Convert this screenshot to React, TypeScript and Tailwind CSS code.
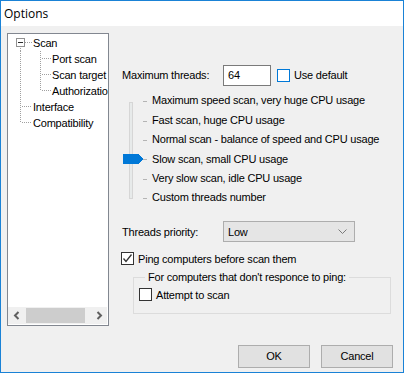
import React from "react";

const font = { fontFamily: '"Liberation Sans", Arial, sans-serif' };

function TreeRow({ kind, label }: { kind: "root" | "child" | "lastchild" | "top" | "lasttop"; label: string }) {
  return (
    <div className="flex items-center h-[16px]">
      <svg width="44" height="16" className="shrink-0" shapeRendering="crispEdges">
        {kind === "root" && (
          <g>
            <rect x="8.5" y="3.5" width="8" height="8" fill="white" stroke="#919191" />
            <line x1="10" y1="7.5" x2="15" y2="7.5" stroke="#2b2b2b" />
            <line x1="17" y1="7.5" x2="24" y2="7.5" stroke="#a0a0a0" strokeDasharray="1 1" />
            <line x1="12.5" y1="13" x2="12.5" y2="16" stroke="#a0a0a0" strokeDasharray="1 1" />
          </g>
        )}
        {(kind === "child" || kind === "lastchild") && (
          <g>
            <line x1="12.5" y1="0" x2="12.5" y2="16" stroke="#a0a0a0" strokeDasharray="1 1" />
            <line x1="32.5" y1="0" x2="32.5" y2={kind === "lastchild" ? 8 : 16} stroke="#a0a0a0" strokeDasharray="1 1" />
            <line x1="34" y1="7.5" x2="43" y2="7.5" stroke="#a0a0a0" strokeDasharray="1 1" />
          </g>
        )}
        {(kind === "top" || kind === "lasttop") && (
          <g>
            <line x1="12.5" y1="0" x2="12.5" y2={kind === "lasttop" ? 8 : 16} stroke="#a0a0a0" strokeDasharray="1 1" />
            <line x1="14" y1="7.5" x2="24" y2="7.5" stroke="#a0a0a0" strokeDasharray="1 1" />
          </g>
        )}
      </svg>
      <span
        className={
          "whitespace-nowrap text-[11px] tracking-[-0.2px] text-black " +
          (kind === "root" || kind === "top" || kind === "lasttop" ? "-ml-[19px]" : "ml-0")
        }
      >
        {label}
      </span>
    </div>
  );
}

function CheckBox({ checked, blue }: { checked?: boolean; blue?: boolean }) {
  return (
    <span
      className={
        "w-[13px] h-[13px] shrink-0 bg-white border flex items-center justify-center " +
        (blue ? "border-[#0078d7]" : "border-[#333333]")
      }
    >
      {checked && (
        <svg width="11" height="11" viewBox="0 0 11 11">
          <polyline points="1.5,5.5 4,8.5 9.5,1.5" fill="none" stroke="#333" strokeWidth="1.3" />
        </svg>
      )}
    </span>
  );
}

const levels = [
  "Maximum speed scan, very huge CPU usage",
  "Fast scan, huge CPU usage",
  "Normal scan - balance of speed and CPU usage",
  "Slow scan, small CPU usage",
  "Very slow scan, idle CPU usage",
  "Custom threads number",
];

export default function App() {
  return (
    <div
      className="w-[404px] h-[373px] border border-[#1a82d6] flex flex-col bg-[#f0f0f0] text-[11px] text-black overflow-hidden"
      style={font}
    >
      <div
        className="h-[25px] bg-white flex items-center pl-[3px] text-[12px] shrink-0"
        style={{ fontFamily: '"Open Sans", "Noto Sans", sans-serif' }}
      >
        Options
      </div>
      <div className="flex-1 flex flex-col pl-[6px] pr-[10px] pt-[7px] tracking-[-0.2px]">
        <div className="flex gap-[13px]">
          {/* Tree */}
          <div className="w-[102px] h-[293px] border border-[#828790] bg-white flex flex-col shrink-0">
            <div className="flex-1 pt-[1px] overflow-hidden">
              <TreeRow kind="root" label="Scan" />
              <TreeRow kind="child" label="Port scan" />
              <TreeRow kind="child" label="Scan target" />
              <TreeRow kind="lastchild" label="Authorization" />
              <TreeRow kind="top" label="Interface" />
              <TreeRow kind="lasttop" label="Compatibility" />
            </div>
            <div className="h-[17px] bg-[#f0f0f0] flex items-center mb-[1px] mr-[1px]">
              <div className="w-[17px] h-full flex items-center justify-center">
                <svg width="8" height="9" viewBox="0 0 8 9">
                  <polyline points="5.5,1 2,4.5 5.5,8" fill="none" stroke="#606060" strokeWidth="2" />
                </svg>
              </div>
              <div className="ml-[1px] w-[59px] h-[15px] bg-[#cdcdcd]" />
              <div className="flex-1" />
              <div className="w-[17px] h-full flex items-center justify-center">
                <svg width="8" height="9" viewBox="0 0 8 9">
                  <polyline points="2.5,1 6,4.5 2.5,8" fill="none" stroke="#606060" strokeWidth="2" />
                </svg>
              </div>
            </div>
          </div>

          {/* Right panel */}
          <div className="flex-1 flex flex-col pt-[32px]">
            <div className="flex items-center h-[21px]">
              <span className="w-[101px] shrink-0">Maximum threads:</span>
              <div className="w-[48px] h-[21px] border border-[#7a7a7a] bg-white flex items-center pl-[4px]">64</div>
              <span className="ml-[6px]">
                <CheckBox blue />
              </span>
              <span className="ml-[4px]">Use default</span>
            </div>

            <div className="mt-[5px] flex">
              <div className="relative w-[21px] shrink-0 flex justify-start pl-[7px] pt-[11px] pb-[8px]">
                <div className="w-[4px] h-full bg-[#e7eaea] border border-[#d6d6d6]" />
                <svg
                  className="absolute left-[1px] top-[63px]"
                  width="20"
                  height="10"
                  viewBox="0 0 20 10"
                  shapeRendering="crispEdges"
                >
                  <polygon points="0,0 15,0 20,5 15,10 0,10" fill="#0078d7" />
                </svg>
              </div>
              <div className="flex flex-col">
                {levels.map((l) => (
                  <div key={l} className="h-[19.4px] flex items-center">
                    <span className="w-[4px] h-[1px] bg-[#b4b4b4] mt-[2px] shrink-0" />
                    <span className="ml-[5px] whitespace-nowrap">{l}</span>
                  </div>
                ))}
              </div>
            </div>

            <div className="mt-[14px] flex items-center h-[21px]">
              <span className="w-[101px] shrink-0">Threads priority:</span>
              <div className="w-[132px] h-[21px] border border-[#adadad] bg-[#e5e5e5] flex items-center pl-[4px] pr-[7px]">
                <span className="flex-1">Low</span>
                <svg width="9" height="5" viewBox="0 0 9 5">
                  <polyline points="0.5,0.5 4.5,4.5 8.5,0.5" fill="none" stroke="#7a7a7a" strokeWidth="1" />
                </svg>
              </div>
            </div>

            <div className="mt-[8px] flex items-center h-[17px] -ml-[1px]">
              <CheckBox checked />
              <span className="ml-[4px] whitespace-nowrap">Ping computers before scan them</span>
            </div>

            <fieldset className="mt-[4px] ml-[11px] w-[258px] border border-[#dcdcdc] pl-[5px] pb-[10px]">
              <legend className="ml-[6px] px-[3px] whitespace-nowrap leading-[13px]">
                For computers that don't responce to ping:
              </legend>
              <div className="mt-[2px] flex items-center h-[17px]">
                <CheckBox />
                <span className="ml-[4px]">Attempt to scan</span>
              </div>
            </fieldset>
          </div>
        </div>

        <div className="flex justify-end gap-[11px] mt-[19px]">
          <button className="w-[72px] h-[23px] border border-[#adadad] bg-[#e1e1e1] flex items-center justify-center">
            OK
          </button>
          <button className="w-[72px] h-[23px] border border-[#adadad] bg-[#e1e1e1] flex items-center justify-center">
            Cancel
          </button>
        </div>
      </div>
    </div>
  );
}
